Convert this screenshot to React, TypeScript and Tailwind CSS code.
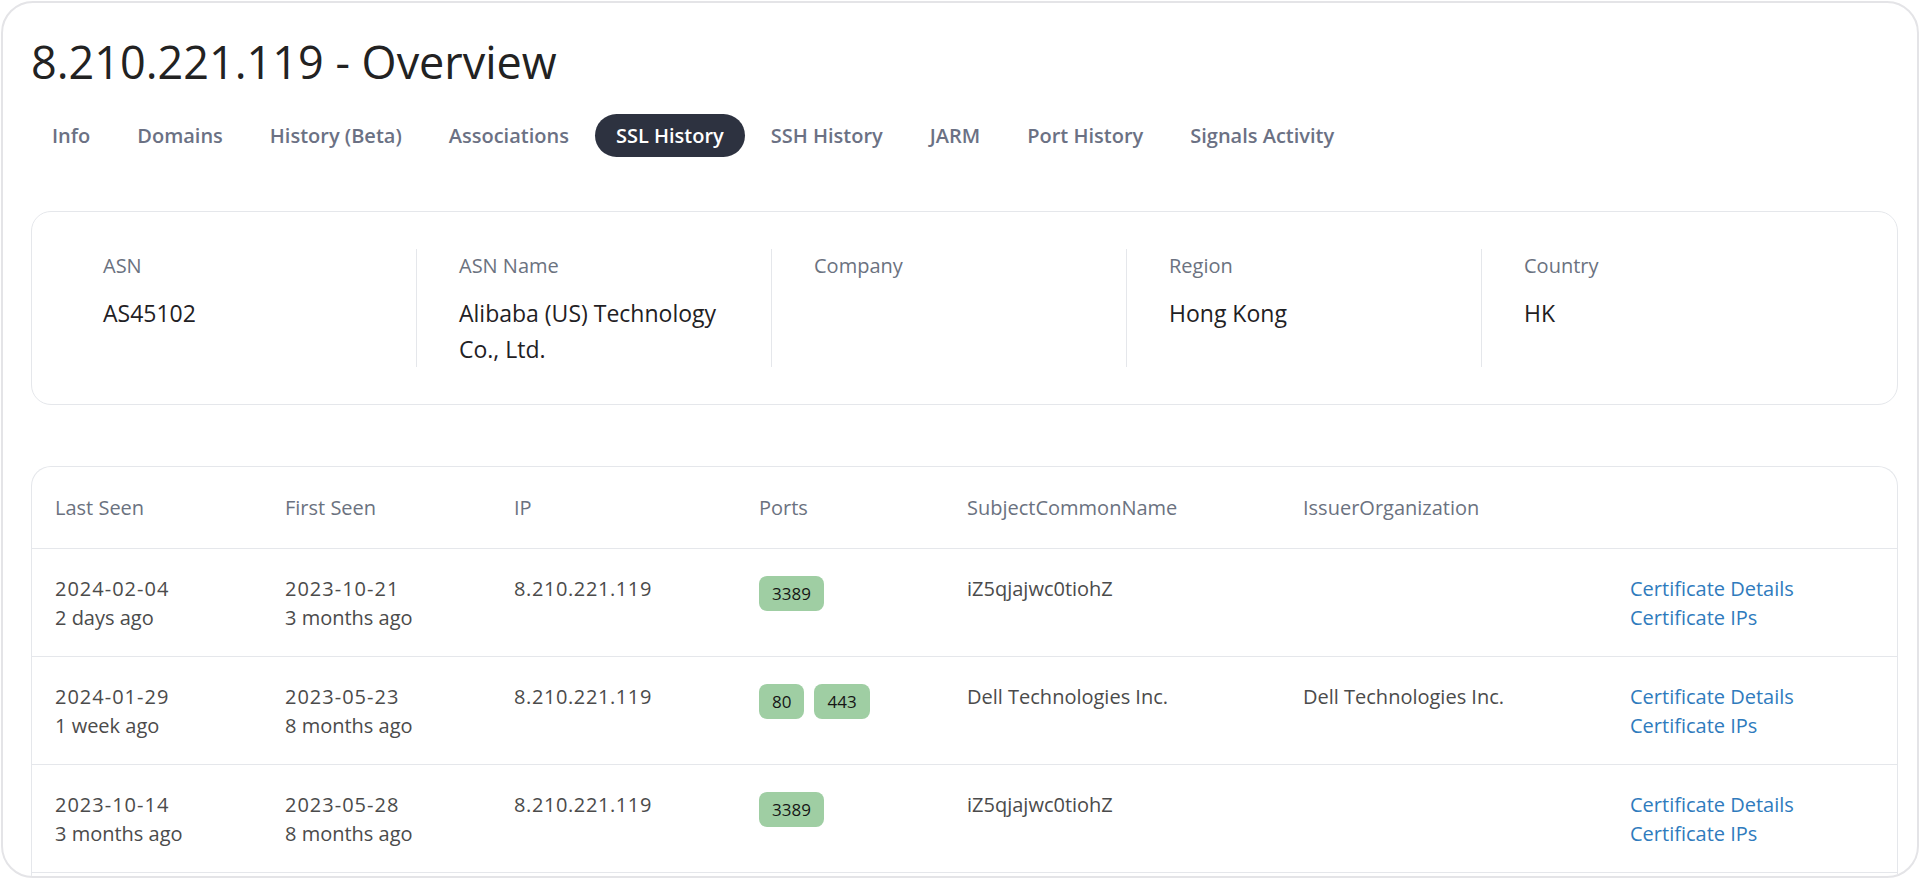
import React from "react";

const tabs = [
  "Info",
  "Domains",
  "History (Beta)",
  "Associations",
  "SSL History",
  "SSH History",
  "JARM",
  "Port History",
  "Signals Activity",
];

const facts = [
  { label: "ASN", value: "AS45102" },
  { label: "ASN Name", value: "Alibaba (US) Technology Co., Ltd." },
  { label: "Company", value: "" },
  { label: "Region", value: "Hong Kong" },
  { label: "Country", value: "HK" },
];

type SslRow = {
  lastSeen: string;
  lastAgo: string;
  firstSeen: string;
  firstAgo: string;
  ip: string;
  ports: string[];
  subject: string;
  issuer: string;
};

const rows: SslRow[] = [
  {
    lastSeen: "2024-02-04",
    lastAgo: "2 days ago",
    firstSeen: "2023-10-21",
    firstAgo: "3 months ago",
    ip: "8.210.221.119",
    ports: ["3389"],
    subject: "iZ5qjajwc0tiohZ",
    issuer: "",
  },
  {
    lastSeen: "2024-01-29",
    lastAgo: "1 week ago",
    firstSeen: "2023-05-23",
    firstAgo: "8 months ago",
    ip: "8.210.221.119",
    ports: ["80", "443"],
    subject: "Dell Technologies Inc.",
    issuer: "Dell Technologies Inc.",
  },
  {
    lastSeen: "2023-10-14",
    lastAgo: "3 months ago",
    firstSeen: "2023-05-28",
    firstAgo: "8 months ago",
    ip: "8.210.221.119",
    ports: ["3389"],
    subject: "iZ5qjajwc0tiohZ",
    issuer: "",
  },
];

const cols =
  "grid grid-cols-[230px_229px_245px_208px_336px_327px_1fr] pl-[23px]";

function Tabs() {
  return (
    <div className="mt-6 flex items-center gap-[5px]">
      {tabs.map((t) => (
        <div
          key={t}
          className={
            t === "SSL History"
              ? "flex h-[43px] items-center rounded-full bg-[#2d3240] px-[21px] text-[20px] font-semibold text-white"
              : "flex h-[43px] items-center rounded-full px-[21px] text-[20px] font-semibold text-[#6b7184]"
          }
        >
          {t}
        </div>
      ))}
    </div>
  );
}

function FactsCard() {
  return (
    <div className="mt-[54px] w-[1867px] rounded-[20px] border border-[#e5e7eb] py-[37px] pl-[29px]">
      <div className="grid grid-cols-[repeat(5,355px)]">
        {facts.map((f, i) => (
          <div
            key={f.label}
            className={
              i === 0
                ? "h-[118px] pl-[42px] pr-[20px]"
                : "h-[118px] border-l border-[#e5e7eb] pl-[42px] pr-[20px]"
            }
          >
            <div className="pt-[3px] text-[20px] leading-[28px] text-[#6b7280]">
              {f.label}
            </div>
            <div className="mt-[15px] text-[23px] leading-[36px] text-[#1f2124]">
              {f.value}
            </div>
          </div>
        ))}
      </div>
    </div>
  );
}

function SslTable() {
  return (
    <div className="mt-[61px] w-[1867px] rounded-t-[20px] border-x border-t border-[#e5e7eb] pb-10">
      <div
        className={`${cols} h-[82px] items-center border-b border-[#e5e7eb] text-[20px] text-[#6b7280]`}
      >
        <div>Last Seen</div>
        <div>First Seen</div>
        <div>IP</div>
        <div>Ports</div>
        <div>SubjectCommonName</div>
        <div>IssuerOrganization</div>
        <div></div>
      </div>
      {rows.map((r, i) => (
        <div
          key={i}
          className={`${cols} h-[108px] border-b border-[#e5e7eb] pt-[25px] text-[20px] leading-[29px] text-[#4b4b4b]`}
        >
          <div>
            <div className="tracking-[1px]">{r.lastSeen}</div>
            <div>{r.lastAgo}</div>
          </div>
          <div>
            <div className="tracking-[1px]">{r.firstSeen}</div>
            <div>{r.firstAgo}</div>
          </div>
          <div className="tracking-[0.6px]">{r.ip}</div>
          <div className="flex items-start gap-[10px] pt-[2px]">
            {r.ports.map((p) => (
              <span
                key={p}
                className="rounded-[8px] bg-[#9fcea3] px-[13px] py-[5px] text-[17px] leading-[25px] text-[#161616]"
              >
                {p}
              </span>
            ))}
          </div>
          <div>{r.subject}</div>
          <div>{r.issuer}</div>
          <div className="text-[#2f7bbd]">
            <div>Certificate Details</div>
            <div>Certificate IPs</div>
          </div>
        </div>
      ))}
    </div>
  );
}

export default function App() {
  return (
    <div className="h-[879px] w-[1920px] bg-white px-[1px] pt-[1px] font-['Open_Sans','Noto_Sans',sans-serif]">
      <div className="h-[877px] overflow-hidden rounded-[32px] border-2 border-[#e4e4e7] pl-[28px] pt-[31px]">
        <h1 className="text-[45px] leading-[56px] text-[#222222]">
          8.210.221.119 - Overview
        </h1>
        <Tabs />
        <FactsCard />
        <SslTable />
      </div>
    </div>
  );
}
